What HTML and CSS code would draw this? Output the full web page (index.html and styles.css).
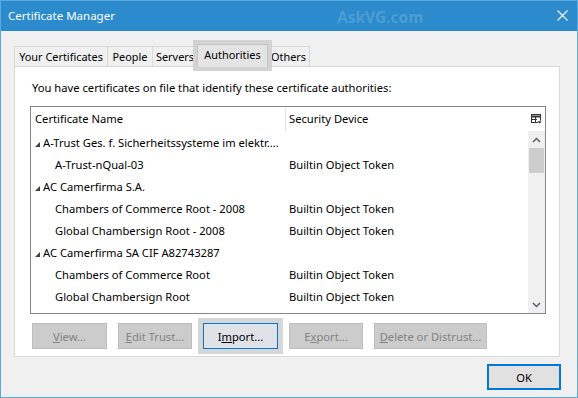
FILE: index.html
```html
<!DOCTYPE html>
<html lang="en">
<head>
    <meta charset="UTF-8">
    <title>Certificate Manager</title>
    <link rel="stylesheet" href="styles.css">
</head>
<body>
<div class="window">
    <div class="titlebar">
        <span class="title">Certificate Manager</span>
        <span class="watermark">AskVG.com</span>
        <svg class="close" width="11" height="11" viewBox="0 0 11 11">
            <path d="M0.5 0.5 L10.5 10.5 M10.5 0.5 L0.5 10.5" stroke="#fff" stroke-width="1.1" fill="none"/>
        </svg>
    </div>

    <div class="content">
        <div class="tabs">
            <div class="tab tab-yours">Your Certificates</div>
            <div class="tab tab-people">People</div>
            <div class="tab tab-servers">Servers</div>
            <div class="tab tab-ca active">Authorities</div>
            <div class="tab tab-others">Others</div>
        </div>

        <div class="panel">
            <p class="intro">You have certificates on file that identify these certificate authorities:</p>

            <div class="listbox">
                <div class="list-head">
                    <div class="cell name">Certificate Name</div>
                    <div class="cell device">Security Device</div>
                    <div class="picker">
                        <svg width="11" height="11" viewBox="0 0 11 11">
                            <rect x="0.5" y="0.5" width="9" height="8" fill="none" stroke="#333"/>
                            <path d="M0.5 2.5 H9.5" stroke="#333" stroke-width="2"/>
                            <path d="M4.5 3 V8.5 M0.5 5.5 H6" stroke="#333"/>
                            <path d="M6 7 H11 L8.5 10 Z" fill="#333" stroke="#fff" stroke-width="0.6"/>
                        </svg>
                    </div>
                </div>
                <div class="list-body">
                    <div class="rows">
                        <div class="row group"><div class="cell name"><span class="twisty"></span>A-Trust Ges. f. Sicherheitssysteme im elektr....</div><div class="cell device"></div></div>
                        <div class="row"><div class="cell name child">A-Trust-nQual-03</div><div class="cell device">Builtin Object Token</div></div>
                        <div class="row group"><div class="cell name"><span class="twisty"></span>AC Camerfirma S.A.</div><div class="cell device"></div></div>
                        <div class="row"><div class="cell name child">Chambers of Commerce Root - 2008</div><div class="cell device">Builtin Object Token</div></div>
                        <div class="row"><div class="cell name child">Global Chambersign Root - 2008</div><div class="cell device">Builtin Object Token</div></div>
                        <div class="row group"><div class="cell name"><span class="twisty"></span>AC Camerfirma SA CIF A82743287</div><div class="cell device"></div></div>
                        <div class="row"><div class="cell name child">Chambers of Commerce Root</div><div class="cell device">Builtin Object Token</div></div>
                        <div class="row"><div class="cell name child">Global Chambersign Root</div><div class="cell device">Builtin Object Token</div></div>
                    </div>
                    <div class="scrollbar">
                        <div class="arrow">
                            <svg width="9" height="6" viewBox="0 0 9 6"><path d="M1 5 L4.5 1.5 L8 5" stroke="#606060" stroke-width="1.5" fill="none"/></svg>
                        </div>
                        <div class="thumb"></div>
                        <div class="track"></div>
                        <div class="arrow">
                            <svg width="9" height="6" viewBox="0 0 9 6"><path d="M1 1 L4.5 4.5 L8 1" stroke="#606060" stroke-width="1.5" fill="none"/></svg>
                        </div>
                    </div>
                </div>
            </div>

            <div class="actions">
                <button class="btn" disabled><u>V</u>iew...</button>
                <button class="btn narrow" disabled><u>E</u>dit Trust...</button>
                <button class="btn focus">I<u>m</u>port...</button>
                <button class="btn narrow" disabled>E<u>x</u>port...</button>
                <button class="btn wide" disabled><u>D</u>elete or Distrust...</button>
            </div>
        </div>

        <div class="footer">
            <button class="btn ok">OK</button>
        </div>
    </div>
</div>
</body>
</html>
```

FILE: styles.css
```css
body {
  margin: 0;
  padding: 0;
  background: #f0f0f0;
  font-family: 'Noto Sans', 'Open Sans', sans-serif;
  font-size: 11.2px;
  color: #000;
}

.window {
  box-sizing: border-box;
  width: 578px;
  height: 398px;
  border: 1px solid #5aa9e0;
  background: #f0f0f0;
  display: flex;
  flex-direction: column;
}

.titlebar {
  position: relative;
  height: 30px;
  background: #2b8bcc;
  color: #fff;
  display: flex;
  align-items: center;
  padding: 0 9px 0 7px;
  font-size: 11.5px;
}

.title {
  flex: 1;
  margin-top: -1px;
}

.watermark {
  position: absolute;
  left: 336px;
  top: 5px;
  font-size: 15.5px;
  font-weight: bold;
  color: rgba(255, 255, 255, 0.17);
}

.close {
  margin-top: -1px;
}

.content {
  flex: 1;
  padding: 13px 16px 0 13px;
  display: flex;
  flex-direction: column;
}

/* tab strip */
.tabs {
  display: flex;
  align-items: flex-end;
  height: 22px;
  font-size: 10.9px;
}

.tab {
  box-sizing: border-box;
  height: 20px;
  line-height: 19px;
  text-align: center;
  white-space: nowrap;
  border: 1px solid #d9d9d9;
  border-bottom: none;
  margin-left: -1px;
  background: #f0f0f0;
}

.tab-yours { width: 94px; margin-left: 0; }
.tab-people { width: 46px; }
.tab-servers { width: 46px; }
.tab-ca { width: 71px; }
.tab-others { width: 43px; }

.tab.active {
  height: 23px;
  line-height: 19px;
  margin-bottom: -1px;
  background: #e4e4e4;
  border-color: #c4c4c4;
  position: relative;
  z-index: 1;
  box-shadow: 0 0 0 4px #d3d3d3;
}

.panel {
  box-sizing: border-box;
  width: 546px;
  height: 291px;
  background: #fff;
  border: 1px solid #d9d9d9;
  padding: 0 13px 0 15px;
}

.intro {
  margin: 13px 0 10px 2px;
  line-height: 16px;
  height: 16px;
}

/* tree list */
.listbox {
  box-sizing: border-box;
  width: 516px;
  height: 208px;
  border: 1px solid #828790;
  display: flex;
  flex-direction: column;
}

.list-head {
  display: flex;
  height: 24px;
  line-height: 24px;
}

.list-head .cell.name {
  border-right: 1px solid #e5e5e5;
  width: 250px;
}

.cell {
  white-space: nowrap;
  overflow: hidden;
}

.cell.name {
  width: 251px;
  padding-left: 4px;
}

.cell.device {
  flex: 1;
  padding-left: 3px;
}

.picker {
  width: 17px;
  display: flex;
  align-items: center;
  justify-content: center;
  padding-top: 1px;
}

.list-body {
  flex: 1;
  display: flex;
}

.rows {
  flex: 1;
  padding-top: 1px;
}

.row {
  display: flex;
  height: 22px;
  line-height: 22px;
}

.cell.child {
  padding-left: 24px;
  width: 231px;
}

.twisty {
  display: inline-block;
  width: 0;
  height: 0;
  border-left: 5px solid transparent;
  border-bottom: 5px solid #404040;
  margin-right: 3px;
  vertical-align: 0;
}

.scrollbar {
  width: 17px;
  background: #f0f0f0;
  display: flex;
  flex-direction: column;
}

.arrow {
  height: 17px;
  display: flex;
  align-items: center;
  justify-content: center;
}

.thumb {
  height: 25px;
  margin: 0 1px;
  background: #cdcdcd;
}

.track {
  flex: 1;
}

/* buttons */
.actions {
  display: flex;
  gap: 11px;
  margin: 9px 0 0 2px;
}

.btn {
  box-sizing: border-box;
  font-family: inherit;
  font-size: 11.2px;
  height: 26px;
  width: 75px;
  padding: 0;
  border: 1px solid #adadad;
  background: #e1e1e1;
  color: #000;
}

.btn.narrow {
  width: 74px;
}

.btn[disabled] {
  background: #cccccc;
  border-color: #bfbfbf;
  color: #838383;
}

.btn.wide {
  width: 113px;
}

.btn.focus {
  border-color: #0078d7;
  background: #dfe3e8;
  box-shadow: 0 0 0 5px #d6d6d6;
}

.footer {
  display: flex;
  justify-content: flex-end;
  margin-top: 7px;
}

.btn.ok {
  width: 74px;
  border: 2px solid #0078d7;
  background: #e1e1e1;
}
```
